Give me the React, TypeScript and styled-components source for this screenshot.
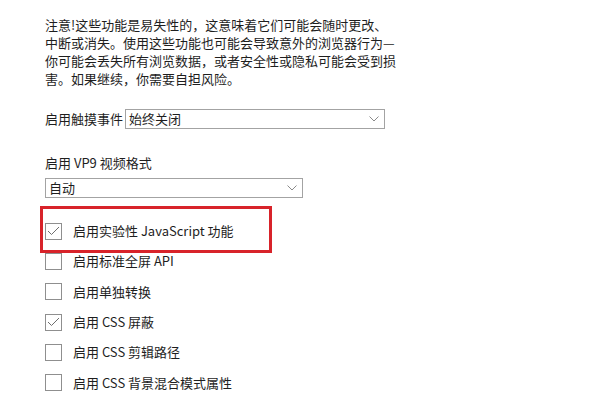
import { createGlobalStyle, styled } from "styled-components";

const GlobalStyle = createGlobalStyle`
    html, body {
        margin: 0;
        padding: 0;
        background: #ffffff;
    }
    body {
        font-family: "Noto Sans CJK SC", "Noto Sans", sans-serif;
        color: #1e1e1e;
    }
`;

const Page = styled.div`
    width: 600px;
    height: 412px;
    overflow: hidden;
    box-sizing: border-box;
    padding: 16px 0 0 45px;
    font-size: 13px;
`;

const Notice = styled.p`
    margin: 0;
    line-height: 18px;

    span {
        display: block;
        white-space: nowrap;
    }
`;

const InlineField = styled.div`
    display: flex;
    align-items: center;
    gap: 2px;
    margin-top: 21px;
    height: 20px;
`;

const Label = styled.span`
    line-height: 20px;
    white-space: nowrap;
`;

const StackedField = styled.div`
    display: flex;
    flex-direction: column;
    margin-top: 24px;
    gap: 5px;
`;

const Select = styled.div<{ $width: number }>`
    width: ${(p) => p.$width}px;
    height: 20px;
    box-sizing: border-box;
    border: 1px solid #a3a3a3;
    display: flex;
    align-items: center;
    justify-content: space-between;
    padding: 0 5px 0 3px;
    line-height: 18px;
    background: #fff;
`;

const Chevron = () => (
    <svg width="10" height="6" viewBox="0 0 10 6">
        <path d="M0.5 0.5 L5 5 L9.5 0.5" fill="none" stroke="#8a8a8a" strokeWidth="1" />
    </svg>
);

const CheckList = styled.div`
    display: flex;
    flex-direction: column;
    margin-top: 18px;
`;

const CheckRow = styled.div<{ $highlight?: boolean }>`
    position: relative;
    display: flex;
    align-items: center;
    gap: 11px;
    height: 30.3px;

    ${(p) =>
        p.$highlight &&
        `
        &::after {
            content: "";
            position: absolute;
            left: -5px;
            top: -10px;
            width: 232px;
            height: 47px;
            box-sizing: border-box;
            border: 3px solid #d8232a;
        }
    `}
`;

const Box = styled.span`
    width: 17px;
    height: 17px;
    box-sizing: border-box;
    border: 1px solid #8f8f8f;
    display: flex;
    align-items: center;
    justify-content: center;
    background: #fff;
`;

const Tick = () => (
    <svg width="13" height="10" viewBox="0 0 13 10">
        <path d="M1 5 L4.5 8.5 L12 1" fill="none" stroke="#6e6e6e" strokeWidth="1" />
    </svg>
);

const CheckText = styled.span`
    line-height: 20px;
    white-space: nowrap;
`;

const flags = [
    { label: "启用实验性 JavaScript 功能", checked: true, highlight: true },
    { label: "启用标准全屏 API", checked: false },
    { label: "启用单独转换", checked: false },
    { label: "启用 CSS 屏蔽", checked: true },
    { label: "启用 CSS 剪辑路径", checked: false },
    { label: "启用 CSS 背景混合模式属性", checked: false },
];

export default function App() {
    return (
        <>
            <GlobalStyle />
            <Page>
                <Notice>
                    <span>注意!这些功能是易失性的，这意味着它们可能会随时更改、</span>
                    <span>中断或消失。使用这些功能也可能会导致意外的浏览器行为—</span>
                    <span>你可能会丢失所有浏览数据，或者安全性或隐私可能会受到损</span>
                    <span>害。如果继续，你需要自担风险。</span>
                </Notice>

                <InlineField>
                    <Label>启用触摸事件</Label>
                    <Select $width={260}>
                        <span>始终关闭</span>
                        <Chevron />
                    </Select>
                </InlineField>

                <StackedField>
                    <Label>启用 VP9 视频格式</Label>
                    <Select $width={258}>
                        <span>自动</span>
                        <Chevron />
                    </Select>
                </StackedField>

                <CheckList>
                    {flags.map((f) => (
                        <CheckRow key={f.label} $highlight={f.highlight}>
                            <Box>{f.checked && <Tick />}</Box>
                            <CheckText>{f.label}</CheckText>
                        </CheckRow>
                    ))}
                </CheckList>
            </Page>
        </>
    );
}
